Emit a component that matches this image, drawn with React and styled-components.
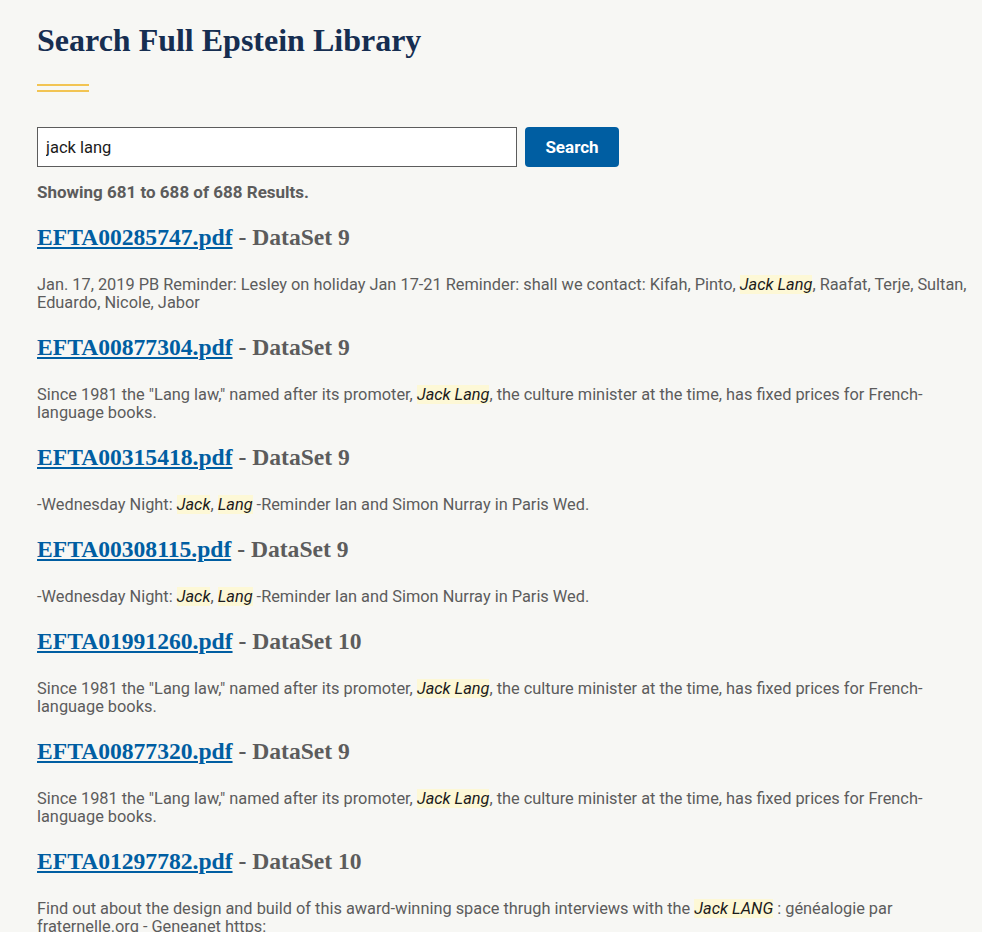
import React from "react";
import styled, { createGlobalStyle } from "styled-components";

const Global = createGlobalStyle`
  html, body { margin: 0; padding: 0; background: #f7f7f4; }
  body { font-family: Roboto, "Liberation Sans", Arial, sans-serif; color: #5c5c5c; }
`;

const Page = styled.main`
  padding: 20px 12px 0 37px;
`;

const Title = styled.h1`
  font-family: "Liberation Serif", "Times New Roman", serif;
  font-weight: 700;
  font-size: 32px;
  line-height: 40px;
  color: #162e51;
  margin: 0;
`;

const Rule = styled.div`
  width: 52px;
  height: 8px;
  margin: 24px 0 0;
  border-top: 2px solid #f2c453;
  border-bottom: 2px solid #f2c453;
  box-sizing: border-box;
`;

const SearchRow = styled.form`
  display: flex;
  gap: 8px;
  margin-top: 35px;
`;

const Input = styled.input`
  width: 480px;
  height: 40px;
  box-sizing: border-box;
  border: 1px solid #5c5c5c;
  background: #fff;
  padding: 0 8px;
  font-family: Roboto, "Liberation Sans", sans-serif;
  font-size: 16.5px;
  color: #1b1b1b;
  outline: none;
`;

const Button = styled.button`
  width: 94px;
  height: 40px;
  border: none;
  border-radius: 4px;
  background: #005ea2;
  color: #fff;
  font-family: Roboto, "Liberation Sans", sans-serif;
  font-weight: 700;
  font-size: 17px;
  cursor: pointer;
`;

const Count = styled.p`
  margin: 15px 0 0;
  font-size: 17px;
  line-height: 20px;
  font-weight: 700;
  color: #5c5c5c;
`;

const ResultTitle = styled.h3`
  margin: 22px 0 0;
  font-family: "Liberation Serif", "Times New Roman", serif;
  font-weight: 700;
  font-size: 23.6px;
  line-height: 26px;
  color: #5c5c5c;
`;

const FileLink = styled.a`
  color: #005ea2;
  text-decoration: underline;
  text-underline-offset: 2px;
`;

const Snippet = styled.p`
  margin: 26px 0 0;
  font-size: 16.35px;
  line-height: 18px;
  color: #5c5c5c;
`;

const Mark = styled.em`
  background: #fdf8d6;
  color: #1b1b1b;
  font-style: italic;
`;

const results = [
  {
    file: "EFTA00285747.pdf",
    set: 9,
    parts: [
      "Jan. 17, 2019 PB Reminder: Lesley on holiday Jan 17-21 Reminder: shall we contact: Kifah, Pinto, ",
      { m: "Jack Lang" },
      ", Raafat, Terje, Sultan, Eduardo, Nicole, Jabor",
    ],
  },
  {
    file: "EFTA00877304.pdf",
    set: 9,
    parts: [
      'Since 1981 the "Lang law," named after its promoter, ',
      { m: "Jack Lang" },
      ", the culture minister at the time, has fixed prices for French-language books.",
    ],
  },
  {
    file: "EFTA00315418.pdf",
    set: 9,
    parts: ["-Wednesday Night: ", { m: "Jack" }, ", ", { m: "Lang" }, " -Reminder Ian and Simon Nurray in Paris Wed."],
  },
  {
    file: "EFTA00308115.pdf",
    set: 9,
    parts: ["-Wednesday Night: ", { m: "Jack" }, ", ", { m: "Lang" }, " -Reminder Ian and Simon Nurray in Paris Wed."],
  },
  {
    file: "EFTA01991260.pdf",
    set: 10,
    parts: [
      'Since 1981 the "Lang law," named after its promoter, ',
      { m: "Jack Lang" },
      ", the culture minister at the time, has fixed prices for French-language books.",
    ],
  },
  {
    file: "EFTA00877320.pdf",
    set: 9,
    parts: [
      'Since 1981 the "Lang law," named after its promoter, ',
      { m: "Jack Lang" },
      ", the culture minister at the time, has fixed prices for French-language books.",
    ],
  },
  {
    file: "EFTA01297782.pdf",
    set: 10,
    parts: [
      "Find out about the design and build of this award-winning space thrugh interviews with the ",
      { m: "Jack LANG" },
      " : généalogie par fraternelle.org - Geneanet https:",
    ],
  },
];

export default function App() {
  return (
    <>
      <Global />
      <Page>
        <Title>Search Full Epstein Library</Title>
        <Rule />
        <SearchRow onSubmit={(e) => e.preventDefault()}>
          <Input defaultValue="jack lang" />
          <Button type="submit">Search</Button>
        </SearchRow>
        <Count>Showing 681 to 688 of 688 Results.</Count>
        {results.map((r) => (
          <section key={r.file}>
            <ResultTitle>
              <FileLink href="#">{r.file}</FileLink> - DataSet {r.set}
            </ResultTitle>
            <Snippet>
              {r.parts.map((p, i) =>
                typeof p === "string" ? <React.Fragment key={i}>{p}</React.Fragment> : <Mark key={i}>{p.m}</Mark>
              )}
            </Snippet>
          </section>
        ))}
      </Page>
    </>
  );
}
